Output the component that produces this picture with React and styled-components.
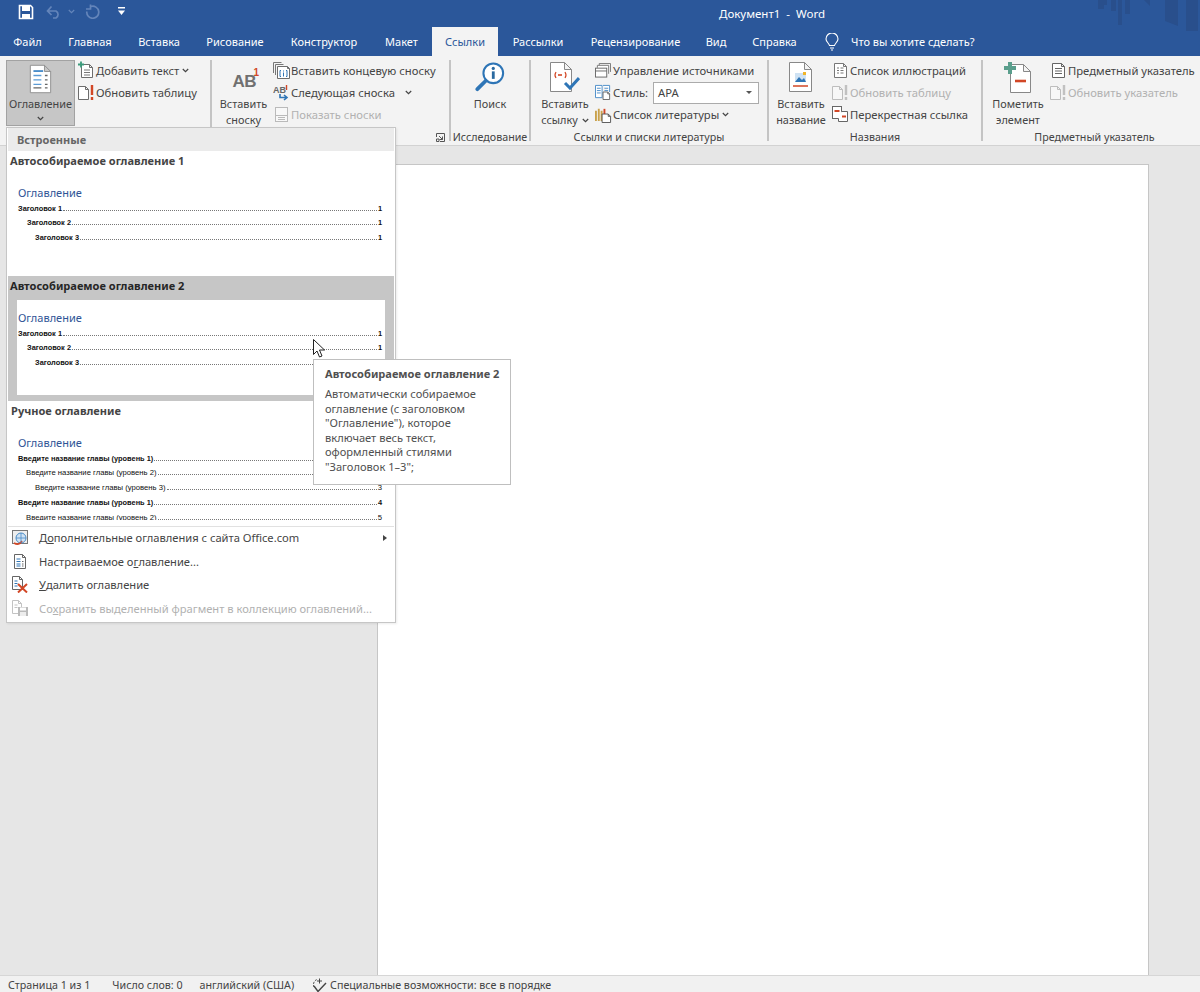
import React from 'react'
import styled, { createGlobalStyle } from 'styled-components'

const FONT = '"Noto Sans", "Open Sans", sans-serif'

const GlobalStyle = createGlobalStyle`
  html, body { margin: 0; padding: 0; background: #e6e6e6; }
  body { font-family: ${FONT}; font-size: 11.25px; overflow: hidden; }
  * { box-sizing: border-box; }
`

/* ---------- icons ---------- */

const Doc = ({ x = 0.5, y = 0.5, w = 11, h = 15, fold = 4, stroke = '#6d6d6d', fill = '#fff' }) => (
  <path
    d={`M${x} ${y}h${w - fold}l${fold} ${fold}v${h - fold}h-${w}zM${x + w - fold} ${y}v${fold}h${fold}`}
    fill={fill}
    stroke={stroke}
  />
)

const SaveIcon = () => (
  <svg width="16" height="16" viewBox="0 0 16 16">
    <path d="M1.5 1.5h11l2 2v11h-13z" fill="none" stroke="#fff" strokeWidth="1.6" />
    <rect x="4" y="2" width="8" height="5" fill="#fff" />
    <rect x="4" y="10" width="8" height="5" fill="#fff" />
  </svg>
)
const UndoIcon = () => (
  <svg width="16" height="14" viewBox="0 0 16 14" fill="none" stroke="#6485ba" strokeWidth="1.7">
    <path d="M1.5 6h8.5a4 4 0 0 1 0 7h-3M5.5 1.500L1.500 6l4 4" />
  </svg>
)
const RedoIcon = () => (
  <svg width="15" height="15" viewBox="0 0 15 15" fill="none" stroke="#6485ba" strokeWidth="1.7">
    <path d="M6 2.500a6 6 0 1 1-4.200 5M5.500 .5v4.500h-4.500" />
  </svg>
)
const TinyChevron = ({ color = '#444' }) => (
  <svg width="7" height="5" viewBox="0 0 7 5" fill="none" stroke={color} strokeWidth="1.2">
    <path d="M.8 1l2.700 2.700L6.200 1" />
  </svg>
)
const CustomizeIcon = () => (
  <svg width="7" height="9" viewBox="0 0 7 9">
    <rect x="0" y="0" width="7" height="1.500" fill="#fff" />
    <path d="M0 3.500h7L3.500 8z" fill="#fff" />
  </svg>
)
const BulbIcon = () => (
  <svg width="14" height="18" viewBox="0 0 14 18" fill="none" stroke="#fff" strokeWidth="1.100">
    <path d="M4.500 12.500C4 10 1 9 1 6a6 6 0 0 1 12 0c0 3-3 4-3.500 6.500zM5 15h4M6 17h2" />
  </svg>
)

const TocBigIcon = () => (
  <svg width="23" height="30" viewBox="0 0 26 34">
    <Doc x={1.5} y={1.5} w={23} h={31} fold={7} stroke="#8a8a8a" />
    <path d="M5 8h11" stroke="#3f86c6" strokeWidth="2" />
    <path d="M5 13h9M5 18h9M5 23h9" stroke="#5b9bd5" strokeWidth="1.500" />
    <path d="M18 13h3M18 18h3M18 23h3M18 27h3M5 27h9" stroke="#666" strokeWidth="1.500" />
  </svg>
)
const AddTextIcon = () => (
  <svg width="16" height="18" viewBox="0 0 16 18">
    <Doc x={3.5} y={3.5} w={11} h={13} fold={3} />
    <path d="M6 9h6M6 11.500h6M6 14h6" stroke="#777" />
    <path d="M0 3.500h6M3 .5v6" stroke="#3a9a7a" strokeWidth="1.800" />
  </svg>
)
const UpdateIcon = ({ muted }) => (
  <svg width="17" height="17" viewBox="0 0 17 17" opacity={muted ? 0.4 : 1}>
    <Doc x={0.5} y={2.5} w={10} h={13} fold={3} />
    <path d="M14 1v10M14 13v3" stroke={muted ? '#777' : '#d24726'} strokeWidth="2.400" />
  </svg>
)
const EndnoteIcon = () => (
  <svg width="17" height="17" viewBox="0 0 17 17">
    <path d="M.5 11V.5h8M2.500 13V2.500h8" fill="none" stroke="#777" />
    <Doc x={4.5} y={4.5} w={12} h={12} fold={2} />
    <path d="M8 8.500H7v6h1M13 8.500h1v6h-1M10.500 10.500v4M10.500 8.500v1" fill="none" stroke="#2e75b6" />
  </svg>
)
const NextNoteIcon = () => (
  <svg width="17" height="17" viewBox="0 0 17 17">
    <text x="0" y="9" fontSize="9" fontWeight="700" fill="#666" fontFamily="Liberation Sans, sans-serif">AB</text>
    <path d="M13.500 1v5" stroke="#d24726" strokeWidth="1.400" />
    <path d="M7 10v3.500h6M11 11l3 2.500-3 2.500" fill="none" stroke="#2e75b6" strokeWidth="1.600" />
  </svg>
)
const ShowNotesIcon = () => (
  <svg width="13" height="15" viewBox="0 0 13 15" opacity="0.45">
    <rect x=".5" y=".5" width="12" height="14" fill="#fff" stroke="#777" />
    <path d="M.5 8.500h12M3 10.500h7M3 12.500h7" stroke="#777" />
  </svg>
)
const AbBigIcon = () => (
  <AbBox>
    <AbText>AB</AbText>
    <AbSup>1</AbSup>
  </AbBox>
)
const SearchBigIcon = () => (
  <svg width="30" height="30" viewBox="0 0 32 32">
    <circle cx="19.500" cy="12" r="10.500" fill="#fff" stroke="#2e75b6" strokeWidth="2.200" />
    <path d="M11.500 20L2.500 29" stroke="#2e75b6" strokeWidth="4" strokeLinecap="round" />
    <circle cx="19.500" cy="6.800" r="1.700" fill="#2b6aa0" />
    <rect x="18" y="10" width="3" height="8" fill="#2b6aa0" />
  </svg>
)
const CitationBigIcon = () => (
  <svg width="30" height="32" viewBox="0 0 30 32">
    <Doc x={0.5} y={0.5} w={21} h={29} fold={7} stroke="#888" />
    <path d="M6 10q-2 3 0 6M15 10q2 3 0 6" fill="none" stroke="#d24726" strokeWidth="1.200" />
    <path d="M8 13h4" stroke="#d24726" strokeWidth="1.600" />
    <path d="M15 21l5 5 9-10" fill="none" stroke="#2e75b6" strokeWidth="3" />
  </svg>
)
const SourcesIcon = () => (
  <svg width="16" height="15" viewBox="0 0 17 16">
    <path d="M4.500 3V.5h12v9" fill="none" stroke="#777" />
    <path d="M2.500 5V2.500h12v9" fill="#fff" stroke="#777" />
    <rect x=".5" y="5.500" width="12" height="9.500" fill="#fff" stroke="#666" />
    <path d="M.5 8.500h12" stroke="#666" />
  </svg>
)
const StyleIcon = () => (
  <svg width="17" height="16" viewBox="0 0 18 17">
    <path d="M.5 1.500h7v13h-7zM8.500 1.500h7v7" fill="#fff" stroke="#4a8cc7" />
    <path d="M2 4.500h4M2 7h4M2 9.500h4M10 4.500h4M10 7h4" stroke="#4a8cc7" />
    <Doc x={8.5} y={8.5} w={7} h={8} fold={2} stroke="#666" />
  </svg>
)
const BiblioIcon = () => (
  <svg width="17" height="17" viewBox="0 0 18 18">
    <path d="M1 5v11M4 3v13M7 5v11" stroke="#c9a14a" strokeWidth="2" />
    <path d="M10 3v6" stroke="#d24726" strokeWidth="2" />
    <Doc x={7.5} y={8.5} w={9} h={9} fold={2.5} stroke="#555" />
  </svg>
)
const CaptionBigIcon = () => (
  <svg width="24" height="31" viewBox="0 0 24 31">
    <Doc x={0.5} y={0.5} w={22} h={29} fold={7} stroke="#888" />
    <rect x="6" y="11" width="11" height="9" fill="#cfe2f3" />
    <path d="M6 20l4-5 3 3 2-2 2 4z" fill="#2e75b6" />
    <rect x="14" y="10" width="3" height="3" fill="#f0b429" />
    <path d="M4 24h15" stroke="#d24726" strokeWidth="1.500" />
  </svg>
)
const FiguresIcon = () => (
  <svg width="13" height="15" viewBox="0 0 13 15">
    <Doc x={0.5} y={0.5} w={12} h={14} fold={3} stroke="#777" />
    <path d="M3 5h2M3 7.500h2M3 10h2M6.500 5h3M6.500 7.500h3M6.500 10h3" stroke="#777" />
  </svg>
)
const CrossRefIcon = () => (
  <svg width="16" height="16" viewBox="0 0 16 16">
    <rect x=".5" y=".5" width="9" height="12" fill="#fff" stroke="#666" />
    <path d="M2.500 5h5" stroke="#d24726" strokeWidth="2" />
    <path d="M9.500 5.500h6v10h-9v-3" fill="#fff" stroke="#666" />
    <path d="M10 10.500h4" stroke="#d24726" strokeWidth="2" />
  </svg>
)
const MarkBigIcon = () => (
  <svg width="28" height="32" viewBox="0 0 28 32">
    <Doc x={6.5} y={2.5} w={20} h={28} fold={7} stroke="#888" />
    <path d="M6 0v12M0 6h12" stroke="#5a9e8c" strokeWidth="4" />
    <path d="M11 19h11" stroke="#d24726" strokeWidth="2.600" />
  </svg>
)
const IndexIcon = () => (
  <svg width="13" height="15" viewBox="0 0 13 15">
    <Doc x={0.5} y={0.5} w={12} h={14} fold={3} stroke="#666" />
    <path d="M3 5.500h7M3 8h7M3 10.500h7" stroke="#666" />
  </svg>
)
const Launcher = () => (
  <svg width="9" height="9" viewBox="0 0 9 9" fill="none" stroke="#555">
    <path d="M.5 4V.5H8.500V8.500H4M3 3l3.500 3.500M6.500 3.500v3h-3" />
    <path d="M.5 6h2.500v2.500H.5z" />
  </svg>
)
const MoreTocIcon = () => (
  <svg width="16" height="16" viewBox="0 0 16 16">
    <rect x=".5" y=".5" width="15" height="13" fill="#eee" stroke="#777" />
    <circle cx="9" cy="8" r="5" fill="#cfe2f3" stroke="#4a8cc7" />
    <path d="M2 13q5 3 8-2" fill="none" stroke="#d24726" strokeWidth="1.600" />
    <path d="M9 3v10M4 8h10" stroke="#4a8cc7" strokeWidth=".8" />
  </svg>
)
const CustomTocIcon = () => (
  <svg width="12" height="15" viewBox="0 0 12 15">
    <Doc x={0.5} y={0.5} w={11} h={14} fold={3} stroke="#666" />
    <path d="M2.500 5h4M2.500 7.500h4M2.500 10h4M2.500 12h4" stroke="#2e75b6" />
    <path d="M8 7.500h1.500M8 10h1.500M8 12h1.500" stroke="#666" />
  </svg>
)
const RemoveTocIcon = () => (
  <svg width="17" height="17" viewBox="0 0 17 17">
    <Doc x={0.5} y={0.5} w={10} h={13} fold={3} stroke="#666" />
    <path d="M2.500 5h3M2.500 7.500h3M2.500 10h3" stroke="#2e75b6" />
    <path d="M6 8l9 8.500M15 8l-9 8.500" stroke="#d24726" strokeWidth="2" />
  </svg>
)
const SaveTocIcon = () => (
  <svg width="16" height="16" viewBox="0 0 16 16" opacity="0.5">
    <Doc x={0.5} y={0.5} w={9} h={13} fold={3} stroke="#888" />
    <path d="M2.500 5h3M2.500 7.500h3" stroke="#888" />
    <rect x="6" y="7" width="10" height="9" fill="#777" />
    <rect x="8" y="7.500" width="6" height="3" fill="#fff" />
    <rect x="8" y="12" width="6" height="4" fill="#ddd" />
  </svg>
)
const AccessIcon = () => (
  <svg width="17" height="15" viewBox="0 0 17 15" fill="none" stroke="#444">
    <path d="M3 9a5.500 5.500 0 0 1 3-7.500" strokeDasharray="2 1.200" />
    <path d="M8.500 .5v5M6 3h5" />
    <path d="M3 8l4 5.500L15 5" strokeWidth="1.400" />
  </svg>
)

/* ---------- layout ---------- */

const Window = styled.div`
  position: relative;
  width: 1200px;
  height: 992px;
  display: flex;
  flex-direction: column;
  color: #444;
  overflow: hidden;
`
const Header = styled.header`
  position: relative;
  background: #2b579a;
  flex: none;
`
const Skyline = styled.svg`
  position: absolute;
  right: 0;
  top: 0;
`
const TitleBar = styled.div`
  height: 27px;
  display: flex;
  align-items: center;
`
const QuickAccess = styled.div`
  width: 719px;
  display: flex;
  align-items: center;
  padding-left: 18px;
  margin-bottom: 4px;
`
const QatSlot = styled.span`
  display: inline-flex;
  justify-content: center;
  align-items: center;
  width: ${p => p.$w}px;
  margin-left: ${p => p.$ml || 0}px;
`
const DocTitle = styled.div`
  color: #fff;
  font-size: 11.5px;
  white-space: pre;
`
const TabRow = styled.nav`
  height: 29px;
  display: flex;
  align-items: stretch;
`
const Tab = styled.div`
  width: ${p => p.$w}px;
  display: flex;
  align-items: center;
  justify-content: center;
  font-size: 11px;
  color: ${p => (p.$active ? '#2b579a' : '#fff')};
  background: ${p => (p.$active ? '#f3f3f3' : 'transparent')};
  white-space: nowrap;
`
const TellMe = styled.div`
  margin-left: 15px;
  display: flex;
  align-items: center;
  gap: 12px;
  color: #fff;
  font-size: 11px;
`
const Ribbon = styled.div`
  height: 90px;
  flex: none;
  display: flex;
  padding-top: 4px;
  background: #f3f3f3;
  border-bottom: 1px solid #d2d2d2;
`
const Group = styled.section`
  width: ${p => p.$w}px;
  flex: none;
  display: flex;
  flex-direction: column;
`
const GroupBody = styled.div`
  height: 70px;
  display: flex;
  padding-left: ${p => p.$pad || 0}px;
`
const GroupLabel = styled.div`
  display: flex;
  justify-content: ${p => (p.$end ? 'flex-end' : 'center')};
  align-items: center;
  height: 16px;
  margin-top: 1px;
  padding-right: ${p => (p.$end ? '4px' : 0)};
  padding-left: ${p => p.$shift || 0}px;
  white-space: nowrap;
  color: #444;
  font-size: 10.7px;
`
const Divider = styled.div`
  width: 2px;
  flex: none;
  margin-bottom: 4px;
  background: #c4c4c4;
`
const BigButton = styled.div`
  width: ${p => p.$w}px;
  height: 66px;
  flex: none;
  display: flex;
  flex-direction: column;
  align-items: center;
  margin-right: ${p => p.$gap || 0}px;
  ${p => p.$pressed && 'background: #c6c6c6; outline: 1px solid #a2a2a2; outline-offset: -1px;'}
`
const BigIconSlot = styled.div`
  height: 36px;
  width: 100%;
  flex: none;
  display: flex;
  justify-content: center;
  align-items: flex-start;
  padding-top: ${p => p.$top ?? 2}px;
`
const BigLine = styled.div`
  height: 16px;
  line-height: 16px;
  display: flex;
  align-items: center;
  gap: 4px;
  white-space: nowrap;
  font-size: 10.9px;
`
const ChevronLine = styled.div`
  height: 13px;
  display: flex;
  align-items: center;
`
const SmallColumn = styled.div`
  display: flex;
  flex-direction: column;
  margin-top: -1px;
`
const SmallRow = styled.div`
  height: 22px;
  display: flex;
  align-items: center;
  white-space: nowrap;
  gap: 3px;
  color: ${p => (p.$muted ? '#b1b1b1' : '#444')};
`
const SmallIcon = styled.span`
  width: 20px;
  flex: none;
  margin-right: -3px;
  display: flex;
  justify-content: center;
  align-items: center;
`
const ChevronSlot = styled.span`
  display: inline-flex;
  margin-left: ${p => p.$ml || 0}px;
`
const StyleSelect = styled.div`
  width: 106px;
  height: 22px;
  margin: 1px 0 0 2px;
  padding: 0 4px;
  display: flex;
  align-items: center;
  justify-content: space-between;
  background: #fff;
  border: 1px solid #ababab;
`
const Caret = styled.span`
  width: 0;
  height: 0;
  margin-right: 2px;
  border-left: 3px solid transparent;
  border-right: 3px solid transparent;
  border-top: 3px solid #555;
`
const AbBox = styled.div`
  position: relative;
  width: 32px;
  height: 32px;
  font-family: "Liberation Sans", sans-serif;
  font-weight: 700;
`
const AbText = styled.span`
  position: absolute;
  left: 5px;
  top: 10px;
  font-size: 17px;
  color: #707070;
  letter-spacing: -0.5px;
`
const AbSup = styled.span`
  position: absolute;
  left: 26px;
  top: 5px;
  font-size: 10px;
  color: #d24726;
`
const Workspace = styled.main`
  flex: 1;
  min-height: 0;
  display: flex;
  align-items: stretch;
  padding: 18px 51px 0 377px;
  background: #e6e6e6;
`
const Page = styled.div`
  flex: 1;
  background: #fff;
  border: 1px solid #c6c6c6;
  border-bottom: 0;
`
const StatusBar = styled.footer`
  height: 17px;
  flex: none;
  display: flex;
  align-items: center;
  padding: 2px 0 0 8px;
  background: #f1f1f1;
  border-top: 1px solid #d6d6d6;
  color: #444;
  font-size: 10.7px;
  white-space: nowrap;
`
const StatusItem = styled.span`
  margin-right: ${p => p.$gap}px;
  display: inline-flex;
  align-items: center;
  gap: 2px;
`

/* ---------- gallery menu ---------- */

const Menu = styled.div`
  position: absolute;
  left: 6px;
  top: 127px;
  width: 390px;
  height: 496px;
  display: flex;
  flex-direction: column;
  background: #fff;
  border: 1px solid #c6c6c6;
  box-shadow: 1px 1px 2px rgba(0, 0, 0, 0.08);
`
const MenuHeader = styled.div`
  height: 23px;
  flex: none;
  margin: 0 1px;
  padding-left: 9px;
  display: flex;
  align-items: center;
  background: #ebebeb;
  color: #666;
  font-weight: 700;
  font-size: 11px;
`
const GalleryItem = styled.div`
  height: 125px;
  flex: none;
  margin: 0 1px;
  overflow: hidden;
  background: ${p => (p.$hover ? '#c6c6c6' : '#fff')};
`
const GalleryTitle = styled.div`
  height: 23px;
  line-height: 20px;
  padding-left: ${p => p.$pad || 2}px;
  font-weight: 700;
  font-size: 11.05px;
  color: ${p => (p.$hover ? '#262626' : '#444')};
`
const Preview = styled.div`
  height: 95px;
  margin: 1px 9px 0 9px;
  padding: 11px 3px 0 1px;
  overflow: hidden;
  background: #fff;
`
const PreviewHeading = styled.div`
  height: 15.5px;
  line-height: 14px;
  font-size: 11px;
  color: #2f5496;
`
const TocLine = styled.div`
  height: 14.75px;
  padding-left: ${p => p.$indent}px;
  display: flex;
  align-items: baseline;
  font-family: "Liberation Sans", sans-serif;
  font-size: ${p => (p.$bold ? 7.4 : 7.7)}px;
  line-height: 14.75px;
  font-weight: ${p => (p.$bold ? 700 : 400)};
  color: #111;
  white-space: nowrap;
`
const Leader = styled.span`
  flex: 1;
  margin: 0 1px;
  border-bottom: 1px dotted #777;
`
const MenuSeparator = styled.div`
  height: 1px;
  flex: none;
  margin: 0 1px;
  background: #e1e1e1;
`
const MenuList = styled.div`
  flex: 1;
  margin-top: -1px;
`
const MenuRow = styled.div`
  height: 23.5px;
  display: flex;
  align-items: center;
  font-size: 11.15px;
  color: ${p => (p.$muted ? '#b1b1b1' : '#444')};
  white-space: nowrap;
`
const MenuIcon = styled.span`
  width: 32px;
  flex: none;
  display: flex;
  justify-content: center;
  padding-right: 6px;
`
const RowArrow = styled.span`
  margin-left: auto;
  margin-right: 8px;
  border-left: 4px solid #444;
  border-top: 3.5px solid transparent;
  border-bottom: 3.5px solid transparent;
`
const Key = styled.span`
  text-decoration: underline;
`
const Tooltip = styled.div`
  position: absolute;
  left: 313px;
  top: 359px;
  width: 198px;
  height: 126px;
  padding: 6px 8px 0 11px;
  background: #fff;
  border: 1px solid #bfbfbf;
  color: #505050;
  z-index: 3;
`
const TooltipTitle = styled.div`
  font-weight: 700;
  line-height: 15px;
  font-size: 11.05px;
  white-space: nowrap;
  margin-bottom: 6px;
`
const TooltipText = styled.div`
  line-height: 14.6px;
  font-size: 11.1px;
  white-space: nowrap;
`
const Cursor = styled.svg`
  position: absolute;
  left: 313px;
  top: 339px;
  z-index: 4;
`

const tabs = [
  ['Файл', 55], ['Главная', 70], ['Вставка', 68], ['Рисование', 84], ['Конструктор', 94],
  ['Макет', 61], ['Ссылки', 66, true], ['Рассылки', 80], ['Рецензирование', 115], ['Вид', 46], ['Справка', 71],
]

const autoLines = [
  ['Заголовок 1', 0, true, '1'],
  ['Заголовок 2', 9, true, '1'],
  ['Заголовок 3', 17, true, '1'],
]
const manualLines = [
  ['Введите название главы (уровень 1)', 0, true, '1'],
  ['Введите название главы (уровень 2)', 8, false, '2'],
  ['Введите название главы (уровень 3)', 17, false, '3'],
  ['Введите название главы (уровень 1)', 0, true, '4'],
  ['Введите название главы (уровень 2)', 8, false, '5'],
]

function TocPreview({ lines }) {
  return (
    <Preview>
      <PreviewHeading>Оглавление</PreviewHeading>
      {lines.map(([text, indent, bold, page], i) => (
        <TocLine key={i} $indent={indent} $bold={bold}>
          {text}
          <Leader />
          {page}
        </TocLine>
      ))}
    </Preview>
  )
}

function Small({ icon, children, muted }) {
  return (
    <SmallRow $muted={muted}>
      <SmallIcon>{icon}</SmallIcon>
      {children}
    </SmallRow>
  )
}

export default function App() {
  return (
    <Window>
      <GlobalStyle />
      <Header>
        <Skyline width="102" height="32" viewBox="0 0 102 32" fill="#294f8c">
          <path d="M0 0h6v9H0zM6 0h3v5H6zM13 0h5v11h-5zM20 0h4v25h-4zM27 0h5v14h-5zM46 0h6v6zM67 0h13v26L67 21zM88 0h12v31H88z" />
        </Skyline>
        <TitleBar>
          <QuickAccess>
            <SaveIcon />
            <QatSlot $w={28} $ml={6}><UndoIcon /></QatSlot>
            <TinyChevron color="#6485ba" />
            <QatSlot $w={34}><RedoIcon /></QatSlot>
            <QatSlot $w={24}><CustomizeIcon /></QatSlot>
          </QuickAccess>
          <DocTitle>Документ1  -  Word</DocTitle>
        </TitleBar>
        <TabRow>
          {tabs.map(([name, w, active]) => (
            <Tab key={name} $w={w} $active={active}>{name}</Tab>
          ))}
          <TellMe><BulbIcon />Что вы хотите сделать?</TellMe>
        </TabRow>
      </Header>

      <Ribbon>
        <Group $w={210}>
          <GroupBody $pad={6}>
            <BigButton $w={69} $gap={1} $pressed>
              <BigIconSlot $top={4}><TocBigIcon /></BigIconSlot>
              <BigLine>Оглавление</BigLine>
              <ChevronLine><TinyChevron /></ChevronLine>
            </BigButton>
            <SmallColumn>
              <Small icon={<AddTextIcon />}>Добавить текст <TinyChevron /></Small>
              <Small icon={<UpdateIcon />}>Обновить таблицу</Small>
            </SmallColumn>
          </GroupBody>
        </Group>
        <Divider />
        <Group $w={237}>
          <GroupBody $pad={5}>
            <BigButton $w={53} $gap={1}>
              <BigIconSlot><AbBigIcon /></BigIconSlot>
              <BigLine>Вставить</BigLine>
              <BigLine>сноску</BigLine>
            </BigButton>
            <SmallColumn>
              <Small icon={<EndnoteIcon />}>Вставить концевую сноску</Small>
              <Small icon={<NextNoteIcon />}>
                Следующая сноска
                <ChevronSlot $ml={7}><TinyChevron /></ChevronSlot>
              </Small>
              <Small icon={<ShowNotesIcon />} muted>Показать сноски</Small>
            </SmallColumn>
          </GroupBody>
          <GroupLabel $end><Launcher /></GroupLabel>
        </Group>
        <Divider />
        <Group $w={78}>
          <GroupBody>
            <BigButton $w={78}>
              <BigIconSlot><SearchBigIcon /></BigIconSlot>
              <BigLine>Поиск</BigLine>
            </BigButton>
          </GroupBody>
          <GroupLabel>Исследование</GroupLabel>
        </Group>
        <Divider />
        <Group $w={236}>
          <GroupBody $pad={5}>
            <BigButton $w={58} $gap={-1}>
              <BigIconSlot><CitationBigIcon /></BigIconSlot>
              <BigLine>Вставить</BigLine>
              <BigLine>ссылку <TinyChevron /></BigLine>
            </BigButton>
            <SmallColumn>
              <Small icon={<SourcesIcon />}>Управление источниками</Small>
              <Small icon={<StyleIcon />}>
                Стиль:
                <StyleSelect>APA<Caret /></StyleSelect>
              </Small>
              <Small icon={<BiblioIcon />}>Список литературы <TinyChevron /></Small>
            </SmallColumn>
          </GroupBody>
          <GroupLabel>Ссылки и списки литературы</GroupLabel>
        </Group>
        <Divider />
        <Group $w={212}>
          <GroupBody $pad={6}>
            <BigButton $w={52} $gap={3}>
              <BigIconSlot><CaptionBigIcon /></BigIconSlot>
              <BigLine>Вставить</BigLine>
              <BigLine>название</BigLine>
            </BigButton>
            <SmallColumn>
              <Small icon={<FiguresIcon />}>Список иллюстраций</Small>
              <Small icon={<UpdateIcon muted />} muted>Обновить таблицу</Small>
              <Small icon={<CrossRefIcon />}>Перекрестная ссылка</Small>
            </SmallColumn>
          </GroupBody>
          <GroupLabel>Названия</GroupLabel>
        </Group>
        <Divider />
        <Group $w={217}>
          <GroupBody $pad={7}>
            <BigButton $w={56} $gap={2}>
              <BigIconSlot><MarkBigIcon /></BigIconSlot>
              <BigLine>Пометить</BigLine>
              <BigLine>элемент</BigLine>
            </BigButton>
            <SmallColumn>
              <Small icon={<IndexIcon />}>Предметный указатель</Small>
              <Small icon={<UpdateIcon muted />} muted>Обновить указатель</Small>
            </SmallColumn>
          </GroupBody>
          <GroupLabel $shift={6}>Предметный указатель</GroupLabel>
        </Group>
      </Ribbon>

      <Workspace>
        <Page />
      </Workspace>

      <StatusBar>
        <StatusItem $gap={22}>Страница 1 из 1</StatusItem>
        <StatusItem $gap={17}>Число слов: 0</StatusItem>
        <StatusItem $gap={17}>английский (США)</StatusItem>
        <StatusItem $gap={0}><AccessIcon />Специальные возможности: все в порядке</StatusItem>
      </StatusBar>

      <Menu>
        <MenuHeader>Встроенные</MenuHeader>
        <GalleryItem>
          <GalleryTitle>Автособираемое оглавление 1</GalleryTitle>
          <TocPreview lines={autoLines} />
        </GalleryItem>
        <GalleryItem $hover>
          <GalleryTitle $hover>Автособираемое оглавление 2</GalleryTitle>
          <TocPreview lines={autoLines} />
        </GalleryItem>
        <GalleryItem>
          <GalleryTitle $pad={3}>Ручное оглавление</GalleryTitle>
          <TocPreview lines={manualLines} />
        </GalleryItem>
        <MenuSeparator />
        <MenuList>
          <MenuRow>
            <MenuIcon><MoreTocIcon /></MenuIcon>
            Д<Key>о</Key>полнительные оглавления с сайта Office.com
            <RowArrow />
          </MenuRow>
          <MenuRow>
            <MenuIcon><CustomTocIcon /></MenuIcon>
            Настраиваемое о<Key>г</Key>лавление...
          </MenuRow>
          <MenuRow>
            <MenuIcon><RemoveTocIcon /></MenuIcon>
            <Key>У</Key>далить оглавление
          </MenuRow>
          <MenuRow $muted>
            <MenuIcon><SaveTocIcon /></MenuIcon>
            Со<Key>х</Key>ранить выделенный фрагмент в коллекцию оглавлений...
          </MenuRow>
        </MenuList>
      </Menu>

      <Tooltip>
        <TooltipTitle>Автособираемое оглавление 2</TooltipTitle>
        <TooltipText>
          Автоматически собираемое<br />
          оглавление (с заголовком<br />
          "Оглавление"), которое<br />
          включает весь текст,<br />
          оформленный стилями<br />
          "Заголовок 1–3";
        </TooltipText>
      </Tooltip>

      <Cursor width="14" height="19" viewBox="0 0 14 19">
        <path d="M.5.5v15l3.500-3.500 2.500 6 2.500-1-2.500-6h5z" fill="#fff" stroke="#222" strokeWidth="1" />
      </Cursor>
    </Window>
  )
}
